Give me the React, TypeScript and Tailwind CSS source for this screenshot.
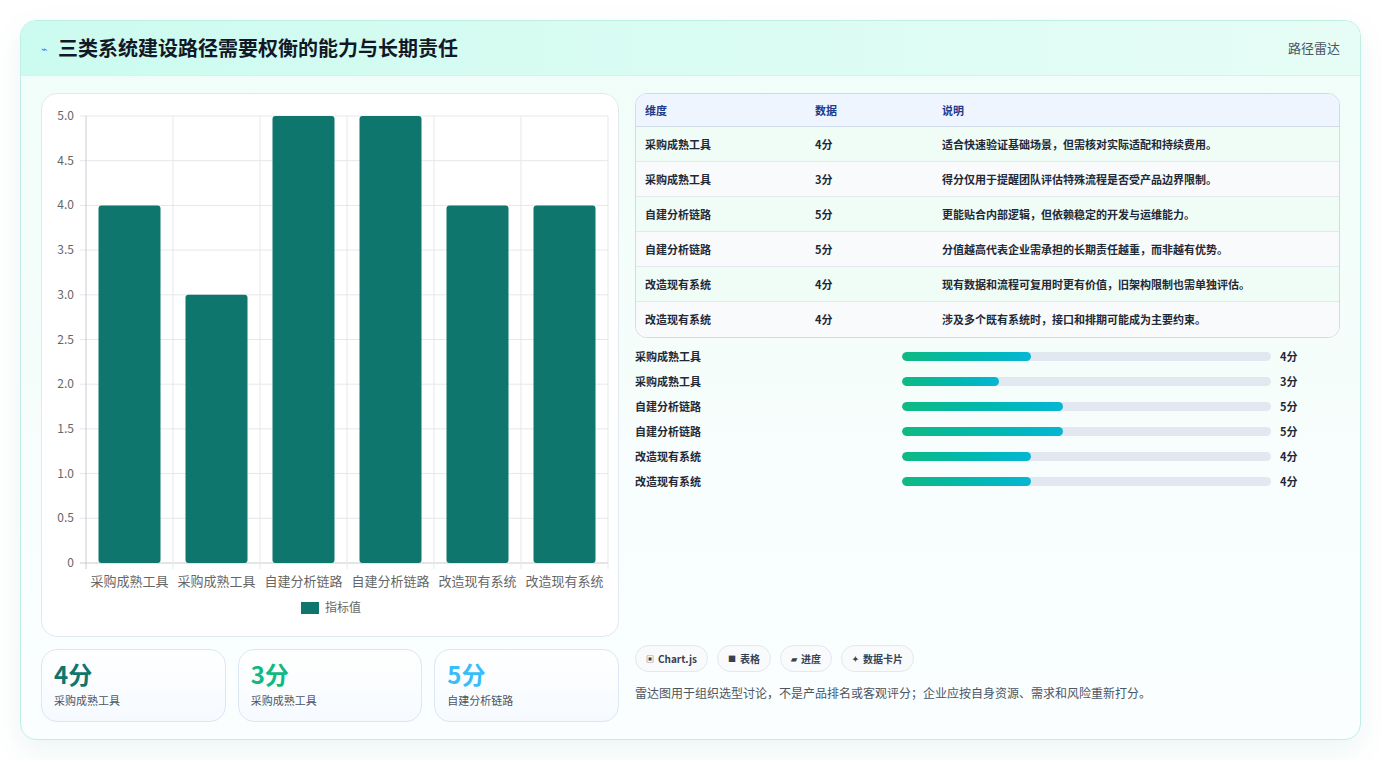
import React from "react";

const rows = [
  ["采购成熟工具", "4分", "适合快速验证基础场景，但需核对实际适配和持续费用。"],
  ["采购成熟工具", "3分", "得分仅用于提醒团队评估特殊流程是否受产品边界限制。"],
  ["自建分析链路", "5分", "更能贴合内部逻辑，但依赖稳定的开发与运维能力。"],
  ["自建分析链路", "5分", "分值越高代表企业需承担的长期责任越重，而非越有优势。"],
  ["改造现有系统", "4分", "现有数据和流程可复用时更有价值，旧架构限制也需单独评估。"],
  ["改造现有系统", "4分", "涉及多个既有系统时，接口和排期可能成为主要约束。"],
];
const vals = [4, 3, 5, 5, 4, 4];
const font = { fontFamily: '"Noto Sans CJK SC", "Noto Sans", sans-serif' };

function Chart() {
  const left = 44, right = 566, top = 22, bottom = 469;
  const cw = (right - left) / 6;
  const ticks = [0, 0.5, 1, 1.5, 2, 2.5, 3, 3.5, 4, 4.5, 5];
  return (
    <svg width="578" height="543" style={font}>
      {ticks.map((t) => {
        const y = bottom - (t / 5) * (bottom - top);
        return (
          <g key={t}>
            <line x1={left - 6} x2={right} y1={y} y2={y} stroke={t === 0 ? "#c9ccd1" : "#e5e7eb"} />
            <text x={32} y={y + 4} textAnchor="end" fontSize="12" fill="#666">{t === 0 ? "0" : t.toFixed(1)}</text>
          </g>
        );
      })}
      {[0, 1, 2, 3, 4, 5, 6].map((i) => (
        <line key={i} x1={left + i * cw} x2={left + i * cw} y1={top} y2={bottom + 6} stroke={i === 0 ? "#c9ccd1" : "#e5e7eb"} />
      ))}
      {vals.map((v, i) => {
        const h = (v / 5) * (bottom - top);
        return <rect key={i} x={left + i * cw + 12.5} y={bottom - h} width={62} height={h} rx={3} fill="#0f766e" />;
      })}
      {rows.map((r, i) => (
        <text key={i} x={left + i * cw + cw / 2} y={492} textAnchor="middle" fontSize="13" fill="#666">{r[0]}</text>
      ))}
      <rect x={259} y={508} width={18} height={12} fill="#0f766e" />
      <text x={283} y={518} fontSize="12" fill="#666">指标值</text>
    </svg>
  );
}

export default function App() {
  return (
    <div className="w-[1381px] h-[760px] bg-white p-5" style={font}>
      <div className="h-[720px] rounded-2xl border border-[#bfeee3] shadow-[0_10px_30px_rgba(15,118,110,0.08)] overflow-hidden bg-gradient-to-b from-[#f0fdf8] to-[#fbfeff] flex flex-col">
        <div className="h-[55px] flex items-center justify-between px-5 bg-gradient-to-r from-[#ccfbef] to-[#e6fdf6] border-b border-[#d5f3ec]">
          <div className="flex items-center gap-2.5">
            <span className="text-[11px] text-[#3b82f6]">⌁</span>
            <span className="text-[20px] font-bold text-[#111827]">三类系统建设路径需要权衡的能力与长期责任</span>
          </div>
          <span className="text-[13px] text-[#4b5563]">路径雷达</span>
        </div>
        <div className="flex gap-4 px-5 pt-[17px]">
          <div className="w-[578px] flex flex-col gap-3">
            <div className="h-[544px] bg-white rounded-2xl border border-[#e2e8f0]"><Chart /></div>
            <div className="grid grid-cols-3 gap-3">
              {[["4分", "text-[#0f766e]", "采购成熟工具"], ["3分", "text-[#10b981]", "采购成熟工具"], ["5分", "text-[#38bdf8]", "自建分析链路"]].map((k, i) => (
                <div key={i} className="h-[73px] rounded-2xl border border-[#dbe7f3] bg-gradient-to-b from-white to-[#f6faff] px-3 pt-2">
                  <div className={`text-[24px] font-bold leading-[32px] ${k[1]}`}>{k[0]}</div>
                  <div className="text-[11px] text-[#4b5563] mt-[2px]">{k[2]}</div>
                </div>
              ))}
            </div>
          </div>
          <div className="flex-1 flex flex-col">
            <div className="rounded-xl border border-[#cfdbe8] overflow-hidden bg-white">
              <div className="flex h-[33px] items-center bg-[#eef5ff] border-b border-[#cfdbe8] text-[11px] font-bold text-[#1e3a8a]">
                <div className="w-[179px] pl-[9px]">维度</div>
                <div className="w-[127px]">数据</div>
                <div>说明</div>
              </div>
              {rows.map((r, i) => (
                <div key={i} className={`flex h-[35px] items-center text-[11px] font-semibold text-[#1f2937] ${i < 5 ? "border-b border-[#e2e8f0]" : ""} ${i % 2 === 0 ? "bg-[#f0fdf6]" : "bg-[#f8fafc]"}`}>
                  <div className="w-[179px] pl-[9px]">{r[0]}</div>
                  <div className="w-[127px]">{r[1]}</div>
                  <div>{r[2]}</div>
                </div>
              ))}
            </div>
            <div className="mt-[9px] flex flex-col gap-[7px]">
              {rows.map((r, i) => (
                <div key={i} className="flex items-center h-[18px] text-[11px] font-semibold text-[#1f2937]">
                  <div className="w-[267px]">{r[0]}</div>
                  <div className="w-[369px] h-[9px] rounded-full bg-[#e2e8f0] overflow-hidden">
                    <div className="h-full rounded-full bg-gradient-to-r from-[#10b981] to-[#06b6d4]" style={{ width: `${(vals[i] / 5) * 43.6}%` }} />
                  </div>
                  <div className="ml-[9px]">{r[1]}</div>
                </div>
              ))}
            </div>
            <div className="mt-auto pb-[20px]">
              <div className="flex gap-[9px]">
                {[["▣", "Chart.js"], ["■", "表格"], ["▰", "进度"], ["✦", "数据卡片"]].map((c, i) => (
                  <span key={i} className="h-[27px] px-[10px] rounded-full border border-[#e2e8f0] bg-[#f8fafc] flex items-center gap-1 text-[10px] font-bold text-[#374151]">
                    <span className="text-[8px]">{c[0]}</span>{c[1]}
                  </span>
                ))}
              </div>
              <div className="mt-[12px] text-[12px] text-[#4b5563]">雷达图用于组织选型讨论，不是产品排名或客观评分；企业应按自身资源、需求和风险重新打分。</div>
            </div>
          </div>
        </div>
      </div>
    </div>
  );
}
